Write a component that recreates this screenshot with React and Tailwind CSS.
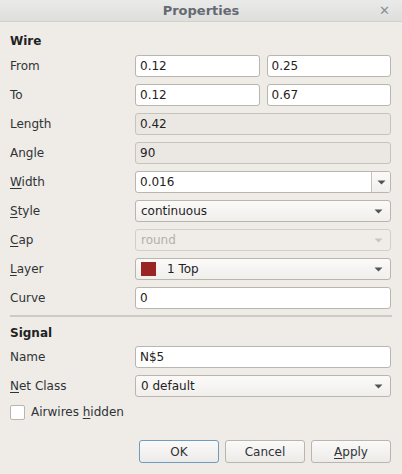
const font = { fontFamily: '"DejaVu Sans", Verdana, sans-serif' };

const Arrow = ({ disabled }) => (
  <svg width="9" height="5" viewBox="0 0 9 5" className="shrink-0">
    <path d="M0.5 0.5 L8.5 0.5 L4.5 4.5 Z" fill={disabled ? '#c9c6c1' : '#505357'} />
  </svg>
);

const Label = ({ children, u }) => {
  if (!u) return <span className="text-[#2e3436]">{children}</span>;
  return (
    <span className="text-[#2e3436]">
      <span className="underline underline-offset-2">{children[0]}</span>
      {children.slice(1)}
    </span>
  );
};

const Input = ({ value, disabled }) => (
  <div
    className={`flex h-[22px] min-w-0 flex-1 items-center rounded-[3px] border px-[4px] ${
      disabled ? 'border-[#c6c2bc] bg-[#ebe8e4]' : 'border-[#b9b5af] bg-white'
    } text-[#1f2223]`}
  >
    {value}
  </div>
);

const Combo = ({ children, disabled }) => (
  <div
    className={`flex h-[22px] flex-1 items-center justify-between rounded-[3px] border pl-[5px] pr-[7px] ${
      disabled
        ? 'border-[#d2cec8] bg-[#f0ede9] text-[#b3afa9]'
        : 'border-[#b9b5af] bg-gradient-to-b from-[#fbfaf9] to-[#f1efec] text-[#1f2223]'
    }`}
  >
    <div className="flex items-center">{children}</div>
    <Arrow disabled={disabled} />
  </div>
);

const Row = ({ label, children }) => (
  <div className="flex h-[22px] items-center">
    <div className="w-[125px] shrink-0">{label}</div>
    <div className="flex min-w-0 flex-1 gap-[7px]">{children}</div>
  </div>
);

const Button = ({ children, primary }) => (
  <div
    className={`flex h-[23px] w-[80px] items-center justify-center rounded-[3px] border bg-gradient-to-b from-[#fbfaf9] to-[#ecebe8] text-[#2e3436] ${
      primary ? 'border-[#6f9ac2]' : 'border-[#b9b5af]'
    }`}
  >
    {children}
  </div>
);

export default function App() {
  return (
    <div style={font} className="flex h-[474px] w-[402px] flex-col bg-[#efebe7] text-[12px] leading-[16px]">
      <div className="relative flex h-[22px] shrink-0 items-center justify-center border-b border-[#d3d1ce] bg-gradient-to-b from-[#eaeaea] to-[#dededd]">
        <span className="text-[13px] font-bold text-[#646a72]">Properties</span>
        <span className="absolute right-[12px] top-[3px] text-[13px] font-bold text-[#8c9096]">✕</span>
      </div>

      <div className="flex flex-col px-[10px] pt-[11px]">
        <div className="mb-[6px] font-bold text-[#1f2223]">Wire</div>
        <div className="flex flex-col gap-[7px] pr-px">
          <Row label={<Label>From</Label>}>
            <Input value="0.12" />
            <Input value="0.25" />
          </Row>
          <Row label={<Label>To</Label>}>
            <Input value="0.12" />
            <Input value="0.67" />
          </Row>
          <Row label={<Label>Length</Label>}>
            <Input value="0.42" disabled />
          </Row>
          <Row label={<Label>Angle</Label>}>
            <Input value="90" disabled />
          </Row>
          <Row label={<Label u>Width</Label>}>
            <div className="flex h-[22px] flex-1 overflow-hidden rounded-[3px] border border-[#b9b5af] bg-white">
              <div className="flex flex-1 items-center px-[4px] text-[#1f2223]">0.016</div>
              <div className="flex w-[19px] items-center justify-center border-l border-[#c6c2bc] bg-gradient-to-b from-[#fbfaf9] to-[#f1efec]">
                <Arrow />
              </div>
            </div>
          </Row>
          <Row label={<Label u>Style</Label>}>
            <Combo>continuous</Combo>
          </Row>
          <Row label={<Label u>Cap</Label>}>
            <Combo disabled>round</Combo>
          </Row>
          <Row label={<Label u>Layer</Label>}>
            <Combo>
              <span className="mr-[11px] h-[14px] w-[15px] bg-[#9a2323]" />
              1 Top
            </Combo>
          </Row>
          <Row label={<Label>Curve</Label>}>
            <Input value="0" />
          </Row>
        </div>

        <div className="mt-[6px] h-[2px] bg-[#cdcac5]" />

        <div className="mb-[5px] mt-[8px] font-bold text-[#1f2223]">Signal</div>
        <div className="flex flex-col gap-[7px] pr-px">
          <Row label={<Label>Name</Label>}>
            <Input value="N$5" />
          </Row>
          <Row label={<Label u>Net Class</Label>}>
            <Combo>0 default</Combo>
          </Row>
        </div>

        <div className="mt-[7px] flex h-[16px] items-center gap-[6px]">
          <span className="h-[15px] w-[15px] rounded-[2px] border border-[#b9b5af] bg-white" />
          <span className="text-[#2e3436]">
            Airwires <span className="underline underline-offset-2">h</span>idden
          </span>
        </div>

        <div className="mt-[20px] flex justify-end gap-[6px] pr-px">
          <Button primary>OK</Button>
          <Button>Cancel</Button>
          <Button>
            <span className="underline underline-offset-2">A</span>pply
          </Button>
        </div>
      </div>
    </div>
  );
}
